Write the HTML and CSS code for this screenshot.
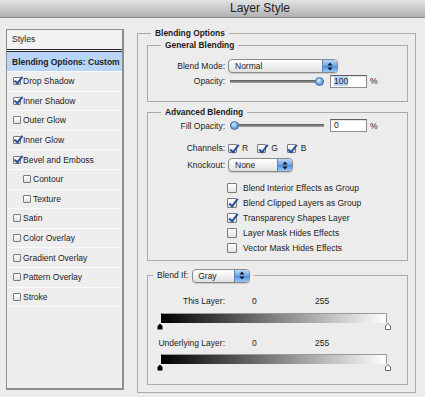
FILE: index.html
```html
<!DOCTYPE html>
<html lang="en">
  <head>
    <meta charset="UTF-8" />
    <meta name="viewport" content="width=device-width, initial-scale=1.0" />
    <title>Layer Style</title>
    <link rel="stylesheet" href="styles.css">
  </head>
  <body>
    <div class="titlebar">Layer Style</div>

    <div class="dialog">
      <div class="styles-list">
        <div class="list-head">Styles</div>
        <div class="list-item selected">Blending Options: Custom</div>
        <div class="list-item"><span class="cb on"></span>Drop Shadow</div>
        <div class="list-item"><span class="cb on"></span>Inner Shadow</div>
        <div class="list-item"><span class="cb"></span>Outer Glow</div>
        <div class="list-item"><span class="cb on"></span>Inner Glow</div>
        <div class="list-item"><span class="cb on"></span>Bevel and Emboss</div>
        <div class="list-item sub"><span class="cb"></span>Contour</div>
        <div class="list-item sub"><span class="cb"></span>Texture</div>
        <div class="list-item"><span class="cb"></span>Satin</div>
        <div class="list-item"><span class="cb"></span>Color Overlay</div>
        <div class="list-item"><span class="cb"></span>Gradient Overlay</div>
        <div class="list-item"><span class="cb"></span>Pattern Overlay</div>
        <div class="list-item"><span class="cb"></span>Stroke</div>
      </div>

      <fieldset class="group outer">
        <legend>Blending Options</legend>

        <fieldset class="group inner general">
          <legend>General Blending</legend>
          <div class="row">
            <label class="lbl">Blend Mode:</label>
            <div class="popup popup-mode">Normal<span class="stepper"><svg width="6" height="9" viewBox="0 0 6 9"><path d="M0.5 3.5L3 0.5 5.5 3.5Z M0.5 5.5L3 8.5 5.5 5.5Z" fill="#111"/></svg></span></div>
          </div>
          <div class="row row-opacity">
            <label class="lbl">Opacity:</label>
            <div class="slider full"><span class="knob"></span></div>
            <div class="field"><span class="hl">100</span></div>
            <span class="pct">%</span>
          </div>
        </fieldset>

        <fieldset class="group inner advanced">
          <legend>Advanced Blending</legend>
          <div class="row row-fill">
            <label class="lbl">Fill Opacity:</label>
            <div class="slider"><span class="knob"></span></div>
            <div class="field">0</div>
            <span class="pct">%</span>
          </div>
          <div class="row row-channels">
            <label class="lbl">Channels:</label>
            <span class="cb mid on"></span><span class="chan">R</span>
            <span class="cb mid on"></span><span class="chan">G</span>
            <span class="cb mid on"></span><span class="chan">B</span>
          </div>
          <div class="row row-knockout">
            <label class="lbl">Knockout:</label>
            <div class="popup popup-knock">None<span class="stepper"><svg width="6" height="9" viewBox="0 0 6 9"><path d="M0.5 3.5L3 0.5 5.5 3.5Z M0.5 5.5L3 8.5 5.5 5.5Z" fill="#111"/></svg></span></div>
          </div>
          <div class="options">
            <div class="opt"><span class="cb big"></span>Blend Interior Effects as Group</div>
            <div class="opt"><span class="cb big on"></span>Blend Clipped Layers as Group</div>
            <div class="opt"><span class="cb big on"></span>Transparency Shapes Layer</div>
            <div class="opt"><span class="cb big"></span>Layer Mask Hides Effects</div>
            <div class="opt"><span class="cb big"></span>Vector Mask Hides Effects</div>
          </div>
        </fieldset>

        <fieldset class="group inner blendif">
          <legend>Blend If:<span class="popup popup-gray">Gray<span class="stepper"><svg width="6" height="9" viewBox="0 0 6 9"><path d="M0.5 3.5L3 0.5 5.5 3.5Z M0.5 5.5L3 8.5 5.5 5.5Z" fill="#111"/></svg></span></span></legend>
          <div class="lrow first">
            <span class="lbl">This Layer:</span>
            <span class="v0">0</span>
            <span>255</span>
          </div>
          <div class="bar"></div>
          <div class="marks">
            <svg width="6" height="7" viewBox="0 0 6 7"><path d="M0.5 6.5V3L3 0.5 5.5 3V6.5Z" fill="#000"/></svg>
            <svg width="6" height="7" viewBox="0 0 6 7"><path d="M0.5 6.5V3L3 0.5 5.5 3V6.5Z" fill="#fff" stroke="#6a6a6a"/></svg>
          </div>
          <div class="lrow">
            <span class="lbl">Underlying Layer:</span>
            <span class="v0">0</span>
            <span>255</span>
          </div>
          <div class="bar second"></div>
          <div class="marks">
            <svg width="6" height="7" viewBox="0 0 6 7"><path d="M0.5 6.5V3L3 0.5 5.5 3V6.5Z" fill="#000"/></svg>
            <svg width="6" height="7" viewBox="0 0 6 7"><path d="M0.5 6.5V3L3 0.5 5.5 3V6.5Z" fill="#fff" stroke="#6a6a6a"/></svg>
          </div>
        </fieldset>
      </fieldset>
    </div>
  </body>
</html>
```

FILE: styles.css
```css
body {
  margin: 0;
  width: 425px;
  height: 397px;
  overflow: hidden;
  background: #ececec;
  font-family: "Liberation Sans", Arial, sans-serif;
  font-size: 8.5px;
  color: #1c1c1c;
}

.titlebar {
  height: 17px;
  line-height: 17px;
  padding-left: 95px;
  text-align: center;
  font-size: 12px;
  color: #222;
  background: linear-gradient(#e3e3e3, #b2b2b2);
  border-bottom: 1px solid #8a8a8a;
}

.dialog {
  display: flex;
  align-items: flex-start;
  padding-left: 6px;
}

/* left column */
.styles-list {
  width: 118px;
  height: 361px;
  box-sizing: border-box;
  margin-top: 11px;
  background: #eeeeee;
  border: 1px solid #8e8e8e;
  border-right-width: 2px;
  border-bottom-width: 2px;
}

.list-head {
  height: 19px;
  line-height: 19px;
  padding-left: 5px;
  background: #f2f2f2;
  border-bottom: 3px double #2c2c2c;
}

.list-item {
  display: flex;
  align-items: center;
  height: 18.6px;
  padding-left: 6px;
  border-bottom: 1px solid #fbfbfb;
}

.list-item.selected {
  height: 19px;
  padding-left: 5px;
  background: #b8d5f8;
  font-weight: bold;
}

.list-item.sub {
  padding-left: 16px;
}

.cb {
  position: relative;
  flex: none;
  width: 6px;
  height: 6px;
  margin-right: 2px;
  border: 1px solid #7b7b7b;
  border-radius: 1px;
  background: linear-gradient(#ffffff, #e2e2e2);
}

.cb.on::after {
  content: "";
  position: absolute;
  left: 2px;
  top: -3px;
  width: 3px;
  height: 7px;
  border: solid #26519c;
  border-width: 0 2px 2px 0;
  transform: rotate(38deg);
}

.cb.mid {
  width: 7px;
  height: 7px;
  margin-right: 5px;
}

.cb.big {
  width: 8px;
  height: 8px;
  margin-right: 6px;
}

.cb.mid.on::after,
.cb.big.on::after {
  left: 2.5px;
  top: -2px;
  width: 3px;
  height: 8px;
}

/* groups */
.group {
  margin: 0;
  padding: 0;
  min-width: 0;
  border: 1px solid #aaaaaa;
}

.group > legend {
  padding: 0 4px;
  line-height: 10px;
  font-size: 8.4px;
  font-weight: bold;
}

.outer {
  width: 279px;
  box-sizing: border-box;
  margin-top: 10px;
  margin-left: 13px;
  padding-bottom: 7px;
}

.outer > legend {
  margin-left: 13px;
}

.inner {
  margin: 0 7px 0 9px;
}

.inner > legend {
  margin-left: 13px;
}

.general {
  margin-top: 2px;
  padding: 9px 0 13px;
}

.advanced {
  margin-top: 5px;
  padding: 2px 0 5px;
}

.blendif {
  margin-top: 7px;
  padding: 12px 0 13px;
}

.blendif > legend {
  margin-left: 5px;
  line-height: 14px;
  font-size: 8.5px;
  font-weight: normal;
}

.row {
  display: flex;
  align-items: center;
  height: 14px;
}

.row-opacity {
  margin-top: 1px;
}

.row-fill {
  height: 13px;
}

.row-channels {
  margin-top: 9px;
}

.row-knockout {
  margin-top: 3px;
}

.lbl {
  flex: none;
  width: 77px;
  margin-right: 3px;
  text-align: right;
}

.popup {
  display: flex;
  align-items: center;
  height: 14px;
  box-sizing: border-box;
  padding-left: 6px;
  border: 1px solid #8a8a8a;
  border-radius: 4px;
  background: linear-gradient(#ffffff, #efefef 55%, #e0e0e0);
  box-shadow: 0 1px 1px rgba(0, 0, 0, 0.15);
  font-weight: normal;
}

.popup-mode {
  width: 110px;
}

.popup-knock {
  width: 65px;
}

.popup-gray {
  display: inline-flex;
  vertical-align: middle;
  width: 58px;
  margin-left: 4px;
  padding-left: 5px;
}

.stepper {
  display: flex;
  align-items: center;
  justify-content: center;
  align-self: stretch;
  width: 14px;
  margin-left: auto;
  border-left: 1px solid #6183b5;
  border-radius: 0 3px 3px 0;
  background: linear-gradient(#b9d8f8, #6ea5e8 50%, #4b8ee0 51%, #9ac9f6);
}

.slider {
  display: flex;
  align-items: center;
  flex: none;
  width: 94px;
  height: 10px;
  margin-left: 2px;
  background: linear-gradient(#555555, #a8a8a8) center / 100% 3px no-repeat;
}

.slider.full {
  justify-content: flex-end;
}

.knob {
  width: 7px;
  height: 7px;
  border: 1px solid #3f6aa6;
  border-radius: 50%;
  background: radial-gradient(circle at 40% 35%, #e0eefc, #72a6e4 55%, #3568b8);
}

.field {
  flex: none;
  width: 37px;
  height: 13px;
  box-sizing: border-box;
  margin-left: 6px;
  padding-left: 3px;
  line-height: 11px;
  background: #ffffff;
  border: 1px solid #8c8c8c;
  border-top-color: #5f5f5f;
  box-shadow: inset 0 1px 1px rgba(0, 0, 0, 0.12);
}

.field .hl {
  background: #b3d3fb;
}

.pct {
  margin-left: 3px;
}

.chan {
  margin-right: 9px;
}

.options {
  margin-top: 8px;
}

.opt {
  display: flex;
  align-items: center;
  height: 15px;
  padding-left: 79px;
}

/* blend if */
.lrow {
  display: flex;
  align-items: center;
  height: 12px;
  margin-top: 7px;
}

.lrow.first {
  margin-top: 0;
}

.v0 {
  width: 63px;
  margin-left: 24px;
}

.bar {
  width: 226px;
  height: 10px;
  box-sizing: border-box;
  margin: 6px 0 0 13px;
  background: linear-gradient(to right, #000000, #ffffff);
  border: 1px solid #9a9a9a;
  border-left-color: #000;
  border-bottom: none;
}

.bar.second {
  margin-top: 5px;
}

.marks {
  display: flex;
  justify-content: space-between;
  width: 234px;
  height: 7px;
  margin-left: 9px;
}

.marks svg {
  display: block;
}
```
